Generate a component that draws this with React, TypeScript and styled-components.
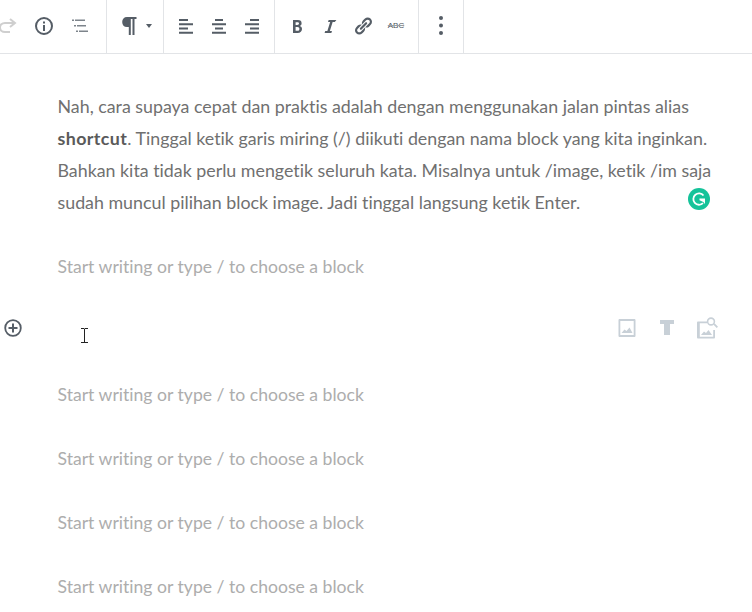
import React from "react";
import styled, { createGlobalStyle } from "styled-components";

const Global = createGlobalStyle`
  html, body { margin: 0; padding: 0; background: #fff; overflow: hidden; }
  body { font-family: Lato, "Open Sans", sans-serif; font-variant-ligatures: none; }
`;

const Page = styled.div`
  width: 752px;
  height: 612px;
  overflow: hidden;
  position: relative;
`;

const Toolbar = styled.div`
  display: flex;
  height: 53px;
  border-bottom: 1px solid #e2e4e7;
`;

const Group = styled.div<{ $width: number; $start?: boolean }>`
  width: ${(p) => p.$width}px;
  display: flex;
  align-items: center;
  justify-content: ${(p) => (p.$start ? "flex-start" : "center")};
  border-right: 1px solid #e2e4e7;
  overflow: hidden;
  padding-bottom: 1px;
  box-sizing: content-box;
  height: 52px;
`;

const ToolButton = styled.span<{ $width?: number; $bleed?: number }>`
  flex: 0 0 ${(p) => p.$width ?? 33}px;
  margin-left: ${(p) => p.$bleed ?? 0}px;
  display: flex;
  align-items: center;
  justify-content: center;
`;

const Icon = styled.svg<{ $color?: string; $gap?: number }>`
  display: block;
  color: ${(p) => p.$color ?? "#555d66"};
  fill: currentColor;
  margin-left: ${(p) => p.$gap ?? 0}px;
`;

const Strike = styled.span`
  font-family: "Liberation Sans", Arial, sans-serif;
  font-size: 8px;
  line-height: 10px;
  color: #4a5159;
  text-decoration: line-through;
  text-decoration-color: #9aa0a6;
`;

const Content = styled.main`
  display: flex;
  flex-direction: column;
  gap: 32px;
  padding-top: 37px;
`;

const Paragraph = styled.p`
  margin: -1px 0 1px 57.5px;
  width: 660px;
  font-size: 17.82px;
  line-height: 32px;
  color: #707070;
  position: relative;
`;

const Strong = styled.strong`
  font-weight: 700;
  color: #5a5a5a;
  letter-spacing: 0.4px;
`;

const Placeholder = styled.div`
  margin-left: 57.5px;
  height: 32px;
  font-size: 17.6px;
  line-height: 32px;
  color: #adadad;
`;

const GrammarlyBadge = styled.span`
  position: absolute;
  left: 630.5px;
  top: 98px;
  width: 22px;
  height: 22px;
`;

const InsertRow = styled.div`
  height: 32px;
  display: flex;
  align-items: flex-start;
  position: relative;
`;

const AddButton = styled.span`
  margin: 4px 0 0 4px;
  width: 18px;
  height: 18px;
`;

const TextCursor = styled.span`
  position: absolute;
  left: 81px;
  top: 13px;
`;

const QuickInserters = styled.div`
  margin-left: auto;
  margin-right: 33px;
  margin-top: 1px;
  display: flex;
  align-items: center;
`;

const Quick = styled.span<{ $gap?: number }>`
  margin-left: ${(p) => p.$gap ?? 0}px;
`;

const Lines = ({ rows }: { rows: [number, number][] }) => (
  <Icon width="20" height="20" viewBox="0 0 20 20">
    {rows.map(([x, w], i) => (
      <rect key={i} x={x} y={3 + i * 4.25} width={w} height="2" />
    ))}
  </Icon>
);

const placeholder = "Start writing or type / to choose a block";

export default function App() {
  return (
    <Page>
      <Global />
      <Toolbar>
        <Group $width={106} $start>
          <ToolButton $width={36} $bleed={-10}>
            <Icon width="20" height="20" viewBox="-2 0 20 20" $color="#cfcfcf">
              <path fill="none" stroke="currentColor" strokeWidth="2" d="M10 16 H5 C2 16 0 14 0 11.5 C0 9 2 7 5 7 H14" />
              <path fill="none" stroke="currentColor" strokeWidth="2" d="M10 3 L15 7 L10 11" />
            </Icon>
          </ToolButton>
          <ToolButton $width={36}>
            <Icon width="20" height="20" viewBox="0 0 20 20">
              <circle cx="10" cy="10" r="8" fill="none" stroke="currentColor" strokeWidth="2" />
              <rect x="9" y="9" width="2" height="6" />
              <rect x="9" y="5.5" width="2" height="2" />
            </Icon>
          </ToolButton>
          <ToolButton $width={36}>
            <Icon width="20" height="20" viewBox="0 0 20 20" $color="#7d848b">
              <rect x="2" y="3.5" width="2" height="1.5" />
              <rect x="5" y="3.5" width="10" height="1.5" />
              <rect x="4" y="9" width="2" height="1.5" />
              <rect x="7" y="9" width="9" height="1.5" />
              <rect x="6" y="14.5" width="2" height="1.5" />
              <rect x="9" y="14.5" width="9" height="1.5" />
            </Icon>
          </ToolButton>
        </Group>
        <Group $width={56}>
          <Icon width="18" height="20" viewBox="0 0 18 20">
            <path d="M8 1 H17.5 V3 H15.5 V19 H13.5 V3 H11.8 V19 H9.8 V11 H8 C5 11 3.2 9 3.2 6 C3.2 3 5 1 8 1 Z" />
          </Icon>
          <Icon width="6" height="4" viewBox="0 0 6 4" $gap={9}>
            <path d="M0 0 H6 L3 4 Z" />
          </Icon>
        </Group>
        <Group $width={110}>
          <ToolButton><Lines rows={[[3, 9], [3, 14], [3, 9], [3, 14]]} /></ToolButton>
          <ToolButton><Lines rows={[[6, 8], [3, 14], [6, 8], [3, 14]]} /></ToolButton>
          <ToolButton><Lines rows={[[8, 9], [3, 14], [8, 9], [3, 14]]} /></ToolButton>
        </Group>
        <Group $width={143}>
          <ToolButton>
            <Icon width="20" height="20" viewBox="0 0 20 20">
              <path fillRule="evenodd" d="M6 4 H11 C13.4 4 14.6 5.2 14.6 7.2 C14.6 8.5 14 9.5 12.8 9.9 C14.2 10.2 15 11.5 15 13.1 C15 15.5 13.4 17 10.6 17 H6 Z M8.6 6.2 V9 H10.2 C11.4 9 12 8.5 12 7.6 C12 6.7 11.4 6.2 10.2 6.2 Z M8.6 11 V14.8 H10.4 C11.7 14.8 12.4 14.1 12.4 12.9 C12.4 11.7 11.7 11 10.4 11 Z" />
            </Icon>
          </ToolButton>
          <ToolButton>
            <Icon width="20" height="20" viewBox="0 0 20 20">
              <path d="M14.78 6h-2.13l-2.8 9h2.12l-.62 2H4.6l.62-2h2.14l2.8-9H8.03l.62-2h7.77z" />
            </Icon>
          </ToolButton>
          <ToolButton>
            <Icon width="20" height="20" viewBox="0 0 20 20">
              <path d="M17.74 2.76c1.68 1.69 1.68 4.41 0 6.1l-1.53 1.52c-1.12 1.12-2.7 1.47-4.14 1.09l2.62-2.61.76-.77.76-.76c.84-.84.84-2.2 0-3.04-.84-.85-2.2-.85-3.04 0l-.77.76-3.38 3.38c-.37-1.44-.02-3.02 1.1-4.14l1.52-1.53c1.69-1.68 4.42-1.68 6.1 0zM8.59 13.43l5.34-5.34c.42-.42.42-1.1 0-1.52-.44-.43-1.13-.39-1.53 0l-5.33 5.34c-.42.42-.42 1.1 0 1.52.44.43 1.13.39 1.52 0zm-.76 2.29l4.14-4.15c.38 1.44.03 3.02-1.09 4.14l-1.52 1.53c-1.69 1.68-4.41 1.68-6.1 0-1.68-1.68-1.68-4.42 0-6.1l1.53-1.52c1.12-1.12 2.7-1.47 4.14-1.1l-4.14 4.15c-.85.84-.85 2.2 0 3.05.84.84 2.2.84 3.04 0z" />
            </Icon>
          </ToolButton>
          <ToolButton>
            <Strike>ABC</Strike>
          </ToolButton>
        </Group>
        <Group $width={44}>
          <ToolButton $width={44}>
            <Icon width="6" height="20" viewBox="0 0 6 20">
              <circle cx="3" cy="2" r="2" />
              <circle cx="3" cy="9.5" r="2" />
              <circle cx="3" cy="17" r="2" />
            </Icon>
          </ToolButton>
        </Group>
      </Toolbar>
      <Content>
        <Paragraph>
          Nah, cara supaya cepat dan praktis adalah dengan menggunakan jalan pintas alias{" "}
          <Strong>shortcut</Strong>. Tinggal ketik garis miring (/) diikuti dengan nama block yang kita inginkan. Bahkan kita tidak perlu mengetik seluruh kata. Misalnya untuk /image, ketik /im saja sudah muncul pilihan block image. Jadi tinggal langsung ketik Enter.
          <GrammarlyBadge>
            <Icon width="22" height="22" viewBox="0 0 22 22">
              <circle cx="11" cy="11" r="11" fill="#15c39a" />
              <path fill="none" stroke="#fff" strokeWidth="1.8" d="M15.5 7.5 A5.7 5.7 0 1 0 15 15.2" />
              <path fill="#fff" d="M11.5 10.5 H17 V16 L15.3 14 L11.5 12.2 Z" />
            </Icon>
          </GrammarlyBadge>
        </Paragraph>
        <Placeholder>{placeholder}</Placeholder>
        <InsertRow>
          <AddButton>
            <Icon width="18" height="18" viewBox="0 0 18 18">
              <circle cx="9" cy="9" r="7.8" fill="none" stroke="currentColor" strokeWidth="1.8" />
              <rect x="8" y="4.5" width="2" height="9" />
              <rect x="4.5" y="8" width="9" height="2" />
            </Icon>
          </AddButton>
          <TextCursor>
            <Icon width="7" height="15" viewBox="0 0 7 15" $color="#222">
              <path d="M0 0 H3 V.5 H4 V0 H7 V1 H4 V14 H7 V15 H0 V14 H3 V1 H0 Z" />
            </Icon>
          </TextCursor>
          <QuickInserters>
            <Quick>
              <Icon width="20" height="20" viewBox="0 0 20 20" $color="#c8d0d7">
                <path fillRule="evenodd" d="M2.5 1 H17.5 C18 1 18.5 1.5 18.5 2 V18 C18.5 18.5 18 19 17.5 19 H2.5 C2 19 1.5 18.5 1.5 18 V2 C1.5 1.5 2 1 2.5 1 Z M3.3 3 V17 H16.7 V3 Z M4.5 15 L7.5 11.5 L9.5 13 L12.5 9.5 L15.5 15 Z" />
              </Icon>
            </Quick>
            <Quick $gap={20}>
              <Icon width="20" height="20" viewBox="0 0 20 20" $color="#c8d0d7">
                <path d="M3 2 H17 V6 H13 V17 H7 V6 H3 Z" />
              </Icon>
            </Quick>
            <Quick $gap={18}>
              <Icon width="24" height="24" viewBox="0 0 24 24" $color="#c8d0d7">
                <path fillRule="evenodd" d="M3 5.5 H12 V7.3 H4.8 V20.7 H18.2 V14 H20 V21.5 C20 22 19.5 22.5 19 22.5 H3 C2.5 22.5 2 22 2 21.5 V6.5 C2 6 2.5 5.5 3 5.5 Z M6 19 L9 15.5 L11 17 L13.5 14 L17 19 Z" />
                <circle cx="16" cy="5.5" r="3.4" fill="none" stroke="currentColor" strokeWidth="1.6" />
                <path d="M18.3 8.5 L19.6 7.3 L23 10.7 L21.7 12 Z" />
              </Icon>
            </Quick>
          </QuickInserters>
        </InsertRow>
        <Placeholder>{placeholder}</Placeholder>
        <Placeholder>{placeholder}</Placeholder>
        <Placeholder>{placeholder}</Placeholder>
        <Placeholder>{placeholder}</Placeholder>
      </Content>
    </Page>
  );
}
